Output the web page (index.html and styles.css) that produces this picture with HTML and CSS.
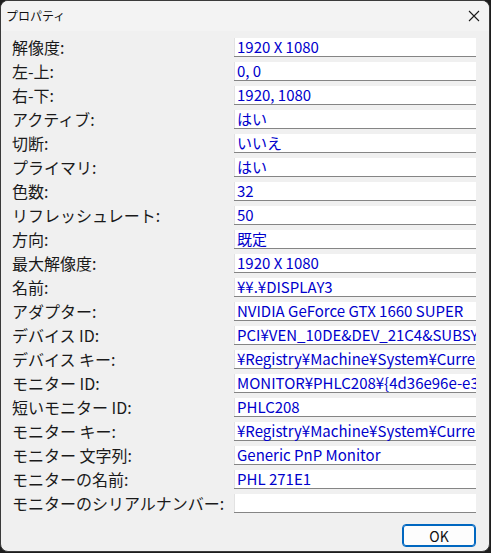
FILE: index.html
```html
<!DOCTYPE html>
<html lang="ja">
<head>
<meta charset="utf-8">
<link rel="stylesheet" href="styles.css">
</head>
<body>
<div class="window">
  <div class="titlebar">
    <span class="title">プロパティ</span>
    <svg class="close" width="12" height="12" viewBox="0 0 12 12"><path d="M1 1 L11 11 M11 1 L1 11" stroke="#1a1a1a" stroke-width="1.1" fill="none"/></svg>
  </div>
  <div class="content">
    <div class="grid">
      <div class="label">解像度:</div><div class="value">1920 X 1080</div>
      <div class="label">左-上:</div><div class="value">0, 0</div>
      <div class="label">右-下:</div><div class="value">1920, 1080</div>
      <div class="label">アクティブ:</div><div class="value">はい</div>
      <div class="label">切断:</div><div class="value">いいえ</div>
      <div class="label">プライマリ:</div><div class="value">はい</div>
      <div class="label">色数:</div><div class="value">32</div>
      <div class="label">リフレッシュレート:</div><div class="value">50</div>
      <div class="label">方向:</div><div class="value">既定</div>
      <div class="label">最大解像度:</div><div class="value">1920 X 1080</div>
      <div class="label">名前:</div><div class="value">¥¥.¥DISPLAY3</div>
      <div class="label">アダプター:</div><div class="value">NVIDIA GeForce GTX 1660 SUPER</div>
      <div class="label">デバイス ID:</div><div class="value">PCI¥VEN_10DE&amp;DEV_21C4&amp;SUBSYS</div>
      <div class="label">デバイス キー:</div><div class="value">¥Registry¥Machine¥System¥CurrentControlSet</div>
      <div class="label">モニター ID:</div><div class="value">MONITOR¥PHLC208¥{4d36e96e-e325-11ce-bfc1-08002be10318}</div>
      <div class="label">短いモニター ID:</div><div class="value">PHLC208</div>
      <div class="label">モニター キー:</div><div class="value">¥Registry¥Machine¥System¥CurrentControlSet</div>
      <div class="label">モニター 文字列:</div><div class="value">Generic PnP Monitor</div>
      <div class="label">モニターの名前:</div><div class="value">PHL 271E1</div>
      <div class="label">モニターのシリアルナンバー:</div><div class="value"></div>
    </div>
    <div class="footer">
      <button class="ok">OK</button>
    </div>
  </div>
</div>
</body>
</html>
```
FILE: styles.css
```css
html, body {
  margin: 0;
  padding: 0;
  background: #1e1e1e;
}
body {
  width: 491px;
  height: 553px;
  overflow: hidden;
  font-family: "Noto Sans CJK JP", "Noto Sans", sans-serif;
}
.window {
  box-sizing: border-box;
  width: 490px;
  height: 552px;
  border: 1px solid #3a3a3a;
  border-radius: 8px;
  background: #f0f0f0;
  overflow: hidden;
  display: flex;
  flex-direction: column;
}
.titlebar {
  height: 30px;
  background: #f3f3f3;
  display: flex;
  align-items: center;
  justify-content: space-between;
  padding: 0 9px 0 5px;
  flex: none;
}
.title {
  font-size: 12px;
  color: #111;
  line-height: 1;
}
.close {
  display: block;
}
.content {
  padding: 4px 13px 0 11px;
  display: flex;
  flex-direction: column;
}
.grid {
  display: grid;
  grid-template-columns: 222px 242px;
  grid-auto-rows: 24px;
}
.label {
  font-size: 16px;
  color: #1a1a1a;
  white-space: nowrap;
  line-height: 24px;
}
.value {
  box-sizing: border-box;
  height: 24px;
  background:
    linear-gradient(#e2e2e2, #e2e2e2) 0 3px / 1px 18px no-repeat,
    linear-gradient(#858585, #858585) 0 21px / 100% 1px no-repeat,
    linear-gradient(#fff, #fff) 0 3px / 100% 18px no-repeat;
  color: #0000cc;
  font-size: 15px;
  line-height: 24px;
  padding-left: 3px;
  white-space: nowrap;
  overflow: hidden;
}
.footer {
  display: flex;
  justify-content: flex-end;
  padding-top: 9px;
}
.ok {
  width: 74px;
  height: 23px;
  box-sizing: border-box;
  border: 1px solid #0067c0;
  border-radius: 4px;
  background: #fdfdfd;
  box-shadow: inset 0 0 0 1px #0067c0;
  font-family: "Noto Sans CJK JP", "Noto Sans", sans-serif;
  font-size: 14px;
  color: #111;
  padding: 0;
}
```
